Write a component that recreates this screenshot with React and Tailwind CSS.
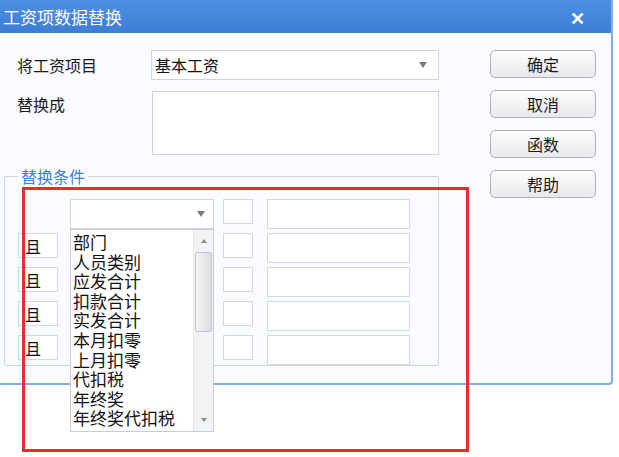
import React from "react";

const font = { fontFamily: '"Noto Sans CJK SC", "Noto Sans", sans-serif' };

const items = ["部门", "人员类别", "应发合计", "扣款合计", "实发合计", "本月扣零", "上月扣零", "代扣税", "年终奖", "年终奖代扣税"];

function Btn({ children }) {
  return (
    <button className="w-[106px] h-[28px] rounded-[5px] border border-[#aeb2b8] bg-gradient-to-b from-white to-[#e6e8eb] text-[16px] leading-none text-[#1a1a1a] shadow-[inset_0_1px_0_#fff]">
      {children}
    </button>
  );
}

function Arrow() {
  return <span className="w-0 h-0 border-l-[4px] border-r-[4px] border-t-[6px] border-l-transparent border-r-transparent border-t-[#7a7a7a]" />;
}

function CondRow({ first }) {
  return (
    <div className="flex items-start h-[30px]">
      <div className="w-[65px] pl-[13px] shrink-0">
        {!first && (
          <div className="w-[40px] h-[25px] border border-[#d3d7de] bg-white text-[16px] leading-[24px] pl-[6px] text-[#111]">且</div>
        )}
      </div>
      <div className="w-[153px] shrink-0">
        {first && (
          <div className="w-[144px] h-[30px] border border-[#cfd3da] bg-white flex items-center justify-end pr-[8px]">
            <Arrow />
          </div>
        )}
      </div>
      <div className="w-[44px] h-[25px] flex shrink-0">
        <div className="w-[30px] h-[25px] border border-[#d3d7de] bg-white" />
      </div>
      <div className="w-[143px] h-[30px] border border-[#d3d7de] bg-white shrink-0" />
    </div>
  );
}

export default function App() {
  return (
    <div className="relative w-[619px] h-[457px] bg-white overflow-hidden" style={font}>
      <div className="w-[613px] h-[385px] flex flex-col border-r-2 border-b-2 border-[#86ace6] rounded-br-[4px] bg-[#f9fbfe]">
        <div className="h-[33px] shrink-0 flex items-center justify-between pl-[3px] pr-[26px] bg-gradient-to-b from-[#4d90e2] to-[#3d7dd4]">
          <span className="text-white text-[17px] leading-none">工资项数据替换</span>
          <span className="text-white text-[18px] font-bold leading-none">✕</span>
        </div>
        <div className="flex flex-1">
          <div className="w-[490px] pt-[17px]">
            <div className="flex items-center h-[30px]">
              <span className="w-[151px] pl-[17px] text-[16px] text-[#1a1a1a]">将工资项目</span>
              <div className="w-[288px] h-[30px] border border-[#cfd3da] bg-white flex items-center justify-between pl-[3px] pr-[11px]">
                <span className="text-[16px] text-[#111]">基本工资</span>
                <Arrow />
              </div>
            </div>
            <div className="flex items-start mt-[11px]">
              <span className="w-[152px] pl-[17px] pt-[1px] text-[16px] text-[#1a1a1a]">替换成</span>
              <div className="w-[287px] h-[64px] border border-[#cfd3da] bg-white" />
            </div>
            <fieldset className="ml-[4px] mt-[11px] w-[435px] border border-[#cdd3dc] rounded-[2px] p-0">
              <legend className="ml-[13px] px-[3px] text-[16px] leading-[20px] text-[#3f7fe2]">替换条件</legend>
              <div className="flex flex-col gap-[4px] pt-[13px]">
                <CondRow first />
                <CondRow />
                <CondRow />
                <CondRow />
                <CondRow />
              </div>
            </fieldset>
          </div>
          <div className="flex flex-col gap-[12px] pt-[17px]">
            <Btn>确定</Btn>
            <Btn>取消</Btn>
            <Btn>函数</Btn>
            <Btn>帮助</Btn>
          </div>
        </div>
      </div>

      <div className="absolute left-[70px] top-[229px] w-[144px] h-[203px] border border-[#c9cdd4] bg-white flex">
        <div className="flex-1 pl-[2px] pt-[2px] overflow-hidden">
          {items.map((t) => (
            <div key={t} className="text-[17px] leading-[19.6px] text-[#111] whitespace-nowrap">{t}</div>
          ))}
        </div>
        <div className="w-[20px] flex flex-col items-center bg-[#f2f3f5] border-l border-[#e3e5e8]">
          <div className="h-[22px] flex items-center">
            <span className="w-0 h-0 border-l-[3px] border-r-[3px] border-b-[4px] border-l-transparent border-r-transparent border-b-[#8a8a8a]" />
          </div>
          <div className="w-[17px] h-[80px] rounded-[2px] border border-[#c2c5ca] bg-gradient-to-r from-[#f4f4f5] to-[#dcdde0]" />
          <div className="flex-1" />
          <div className="h-[22px] flex items-center">
            <span className="w-0 h-0 border-l-[3px] border-r-[3px] border-t-[4px] border-l-transparent border-r-transparent border-t-[#8a8a8a]" />
          </div>
        </div>
      </div>

      <div className="absolute left-[22px] top-[187px] w-[447px] h-[265px] border-[3px] border-[#ec2b2b]" />
    </div>
  );
}
